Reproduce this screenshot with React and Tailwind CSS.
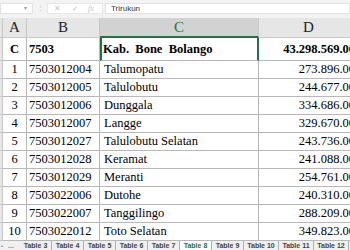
import React from "react";

const rows = [
  ["1", "7503012004", "Talumopatu", "273.896.00"],
  ["2", "7503012005", "Talulobutu", "244.677.00"],
  ["3", "7503012006", "Dunggala", "334.686.00"],
  ["4", "7503012007", "Langge", "329.670.00"],
  ["5", "7503012027", "Talulobutu Selatan", "243.736.00"],
  ["6", "7503012028", "Keramat", "241.088.00"],
  ["7", "7503012029", "Meranti", "254.761.00"],
  ["8", "7503022006", "Dutohe", "240.310.00"],
  ["9", "7503022007", "Tanggilingo", "288.209.00"],
  ["10", "7503022012", "Toto Selatan", "349.823.00"],
];

const tabs = ["Table 3", "Table 4", "Table 5", "Table 6", "Table 7", "Table 8", "Table 9", "Table 10", "Table 11", "Table 12"];

const serif = { fontFamily: '"Liberation Serif", serif' };

export default function App() {
  return (
    <div className="w-[350px] h-[250px] overflow-hidden bg-white flex flex-col" style={serif}>
      {/* formula bar */}
      <div className="h-[17px] shrink-0 bg-[#f3f3f3] flex items-center gap-0 text-[8px]" style={{ fontFamily: '"Liberation Sans", sans-serif' }}>
        <div className="w-[33px] h-[11px] bg-white border border-[#e2e2e2] flex items-center justify-end pr-[5px] text-[#9a9a9a] text-[6px]">▾</div>
        <div className="w-[14px] flex justify-center text-[#c8c8c8] text-[7px]">⋮</div>
        <div className="w-[56px] h-[11px] bg-white border border-[#e8e8e8] flex items-center text-[#c4c4c4] text-[8px]">
          <span className="ml-[6px]">✕</span>
          <span className="ml-[11px]">✓</span>
          <span className="ml-[9px] italic" style={serif}>fx</span>
        </div>
        <div className="ml-[2px] flex-1 h-[11px] bg-white border border-[#e2e2e2] flex items-center pl-[5px] text-[#333] text-[8px]">Trirukun</div>
      </div>
      <div className="h-[1px] shrink-0 bg-[#f3f3f3]" />
      {/* column headers */}
      <div className="flex h-[20px] shrink-0 bg-[#e6e6e6] text-[15px] text-[#222] leading-none">
        <div className="w-[3px] shrink-0 border-r border-b border-[#c8c8c8]" />
        <div className="w-[24px] shrink-0 border-r border-b border-[#c8c8c8] flex items-center justify-center">A</div>
        <div className="w-[73px] shrink-0 border-r border-b border-[#c8c8c8] flex items-center justify-center">B</div>
        <div className="w-[159px] shrink-0 bg-[#d2d2d2] border-r border-[#c8c8c8] border-b-2 border-b-[#217346] flex items-center justify-center text-[#217346]">C</div>
        <div className="w-[99px] shrink-0 border-b border-[#c8c8c8] flex items-center justify-center">D</div>
      </div>
      {/* row C */}
      <div className="flex h-[23px] shrink-0 text-[12.5px] font-bold text-black">
        <div className="w-[3px] shrink-0 bg-[#e6e6e6] border-r border-b border-[#c8c8c8]" />
        <div className="w-[24px] shrink-0 border-r border-b border-[#b8b8b8] flex items-center justify-center">C</div>
        <div className="w-[73px] shrink-0 border-r border-b border-[#b8b8b8] flex items-center pl-[2px]">7503</div>
        <div className="w-[159px] shrink-0 border-l-2 border-r-2 border-b border-l-[#217346] border-r-[#217346] border-b-[#b8b8b8] flex items-center pl-[1px] whitespace-pre">Kab.  Bone  Bolango</div>
        <div className="w-[99px] shrink-0 border-b border-[#b8b8b8] flex items-center justify-end pr-[3px] -mr-[6px]">43.298.569.00</div>
      </div>
      {rows.map((r) => (
        <div key={r[0]} className="flex h-[18px] shrink-0 text-[12.5px] text-black">
          <div className="w-[3px] shrink-0 bg-[#e6e6e6] border-r border-b border-[#c8c8c8]" />
          <div className="w-[24px] shrink-0 border-r border-b border-[#b8b8b8] flex items-center justify-center">{r[0]}</div>
          <div className="w-[73px] shrink-0 border-r border-b border-[#b8b8b8] flex items-center pl-[2px]">{r[1]}</div>
          <div className="w-[159px] shrink-0 border-r border-b border-[#b8b8b8] flex items-center pl-[4px]">{r[2]}</div>
          <div className="w-[99px] shrink-0 border-b border-[#b8b8b8] flex items-center justify-end pr-[3px] -mr-[6px]">{r[3]}</div>
        </div>
      ))}
      {/* tabs */}
      <div className="flex-1 bg-[#f0f0f0] flex items-start text-[7px] font-bold text-[#444] border-b-2 border-[#9fc7ad]" style={{ fontFamily: '"Liberation Sans", sans-serif' }}>
        <div className="w-[20px] h-full flex items-center shrink-0 text-[#888] pl-[1px]">
          <span className="text-[6px]">•</span>
          <span className="ml-[5px]">...</span>
        </div>
        {tabs.map((t) => (
          <div
            key={t}
            className={
              "h-full flex items-center justify-center px-[2px] shrink-0 border-r border-[#b0b0b0] " +
              (t === "Table 8" ? "bg-white text-[#217346]" : "")
            }
            style={{ width: t.length > 7 ? 35 : 32 }}
          >
            {t}
          </div>
        ))}
      </div>
    </div>
  );
}
